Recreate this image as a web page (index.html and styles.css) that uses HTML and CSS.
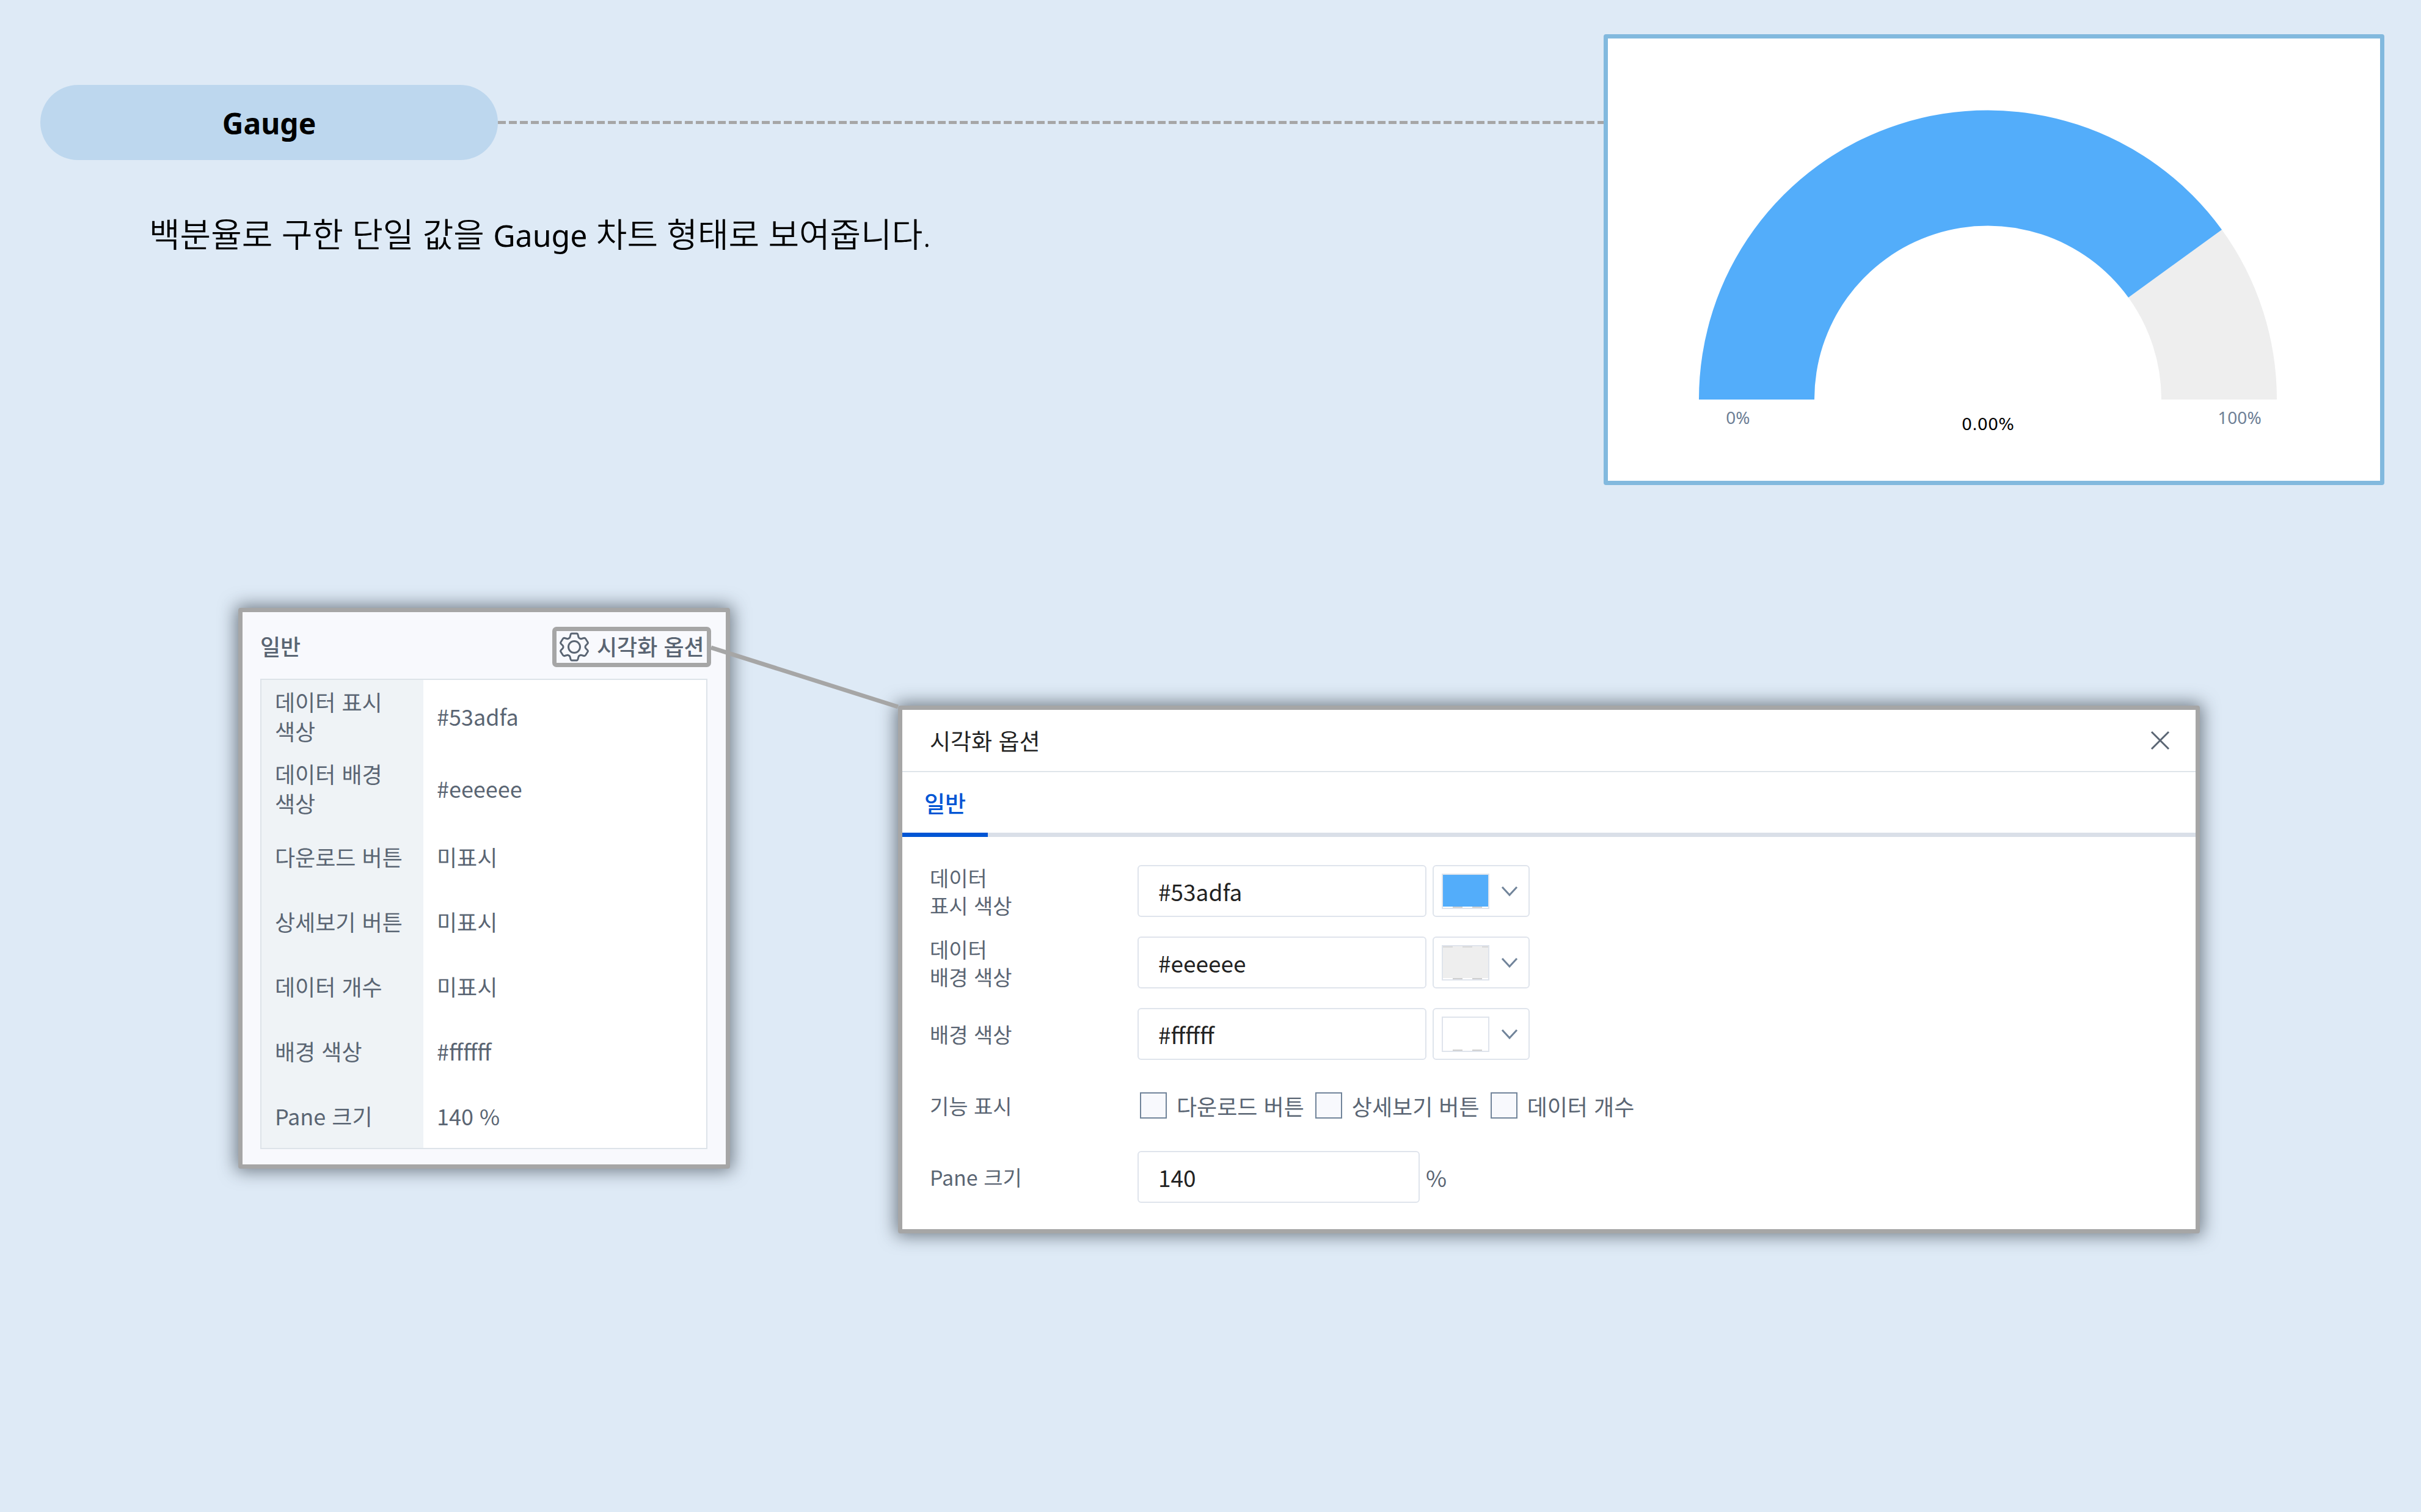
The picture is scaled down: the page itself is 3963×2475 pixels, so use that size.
FILE: index.html
```html
<!DOCTYPE html>
<html lang="ko">
<head>
<meta charset="utf-8">
<meta name="viewport" content="width=device-width, initial-scale=1">
<title>Gauge</title>
<link rel="stylesheet" href="styles.css">
</head>
<body>
<main class="page">
  <section class="intro">
    <div class="intro-text">
      <div class="title-row">
        <h1 class="title-pill">Gauge</h1>
        <div class="title-line"></div>
      </div>
      <p class="description">백분율로 구한 단일 값을 <span class="latin">Gauge</span> 차트 형태로 보여줍니다.</p>
    </div>
    <figure class="chart">
      <svg class="chart-svg" viewBox="0 0 1264 724" role="img" aria-label="Gauge">
        <path fill="#eeeeee" d="M1005 313 A473 473 0 0 1 1095 591 H906 A284 284 0 0 0 852 424 Z"/>
        <path fill="#53adfa" d="M149 591 A473 473 0 0 1 1005 313 L852 424 A284 284 0 0 0 338 591 Z"/>
        <text class="chart-label" x="213" y="631">0%</text>
        <text class="chart-value" x="622" y="641">0.00%</text>
        <text class="chart-label" x="1034" y="631">100%</text>
      </svg>
    </figure>
  </section>

  <section class="panels">
    <section class="panel summary">
      <header class="summary-head">
        <h2 class="summary-title">일반</h2>
        <div class="option-anchor">
          <button class="option-button" type="button">
            <svg class="gear" viewBox="0 0 48 48" aria-hidden="true">
              <path d="M20 2 H28 Q29.500 2 30 4 L31 8 Q31.500 9.500 33 10 Q34.500 11 36 10.500 L39.500 9.500 Q41.500 9 42.500 10.500 L46 16 Q47 17.500 45.500 19 L43 21.500 Q42 22.500 42 24 Q42 25.500 43 26.500 L45.500 29 Q47 30.500 46 32 L42.500 37.500 Q41.500 39 39.500 38.500 L36 37.500 Q34.500 37 33 38 Q31.500 38.500 31 40 L30 44 Q29.500 46 28 46 H20 Q18.500 46 18 44 L17 40 Q16.500 38.500 15 38 Q13.500 37 12 37.500 L8.500 38.500 Q6.500 39 5.500 37.500 L2 32 Q1 30.500 2.500 29 L5 26.500 Q6 25.500 6 24 Q6 22.500 5 21.500 L2.500 19 Q1 17.500 2 16 L5.500 10.500 Q6.500 9 8.500 9.500 L12 10.500 Q13.500 11 15 10 Q16.500 9.500 17 8 L18 4 Q18.500 2 20 2 Z"/>
              <circle cx="24" cy="24" r="9.500"/>
            </svg>
            <span>시각화 옵션</span>
          </button>
          <svg class="connector" viewBox="0 0 308 106" aria-hidden="true"><path d="M0 4 L306 101"/></svg>
        </div>
      </header>
      <table class="summary-table">
        <tbody>
          <tr class="tall"><th scope="row">데이터 표시 색상</th><td>#53adfa</td></tr>
          <tr class="tall"><th scope="row">데이터 배경 색상</th><td>#eeeeee</td></tr>
          <tr><th scope="row">다운로드 버튼</th><td>미표시</td></tr>
          <tr><th scope="row">상세보기 버튼</th><td>미표시</td></tr>
          <tr><th scope="row">데이터 개수</th><td>미표시</td></tr>
          <tr><th scope="row">배경 색상</th><td>#ffffff</td></tr>
          <tr><th scope="row">Pane 크기</th><td>140 %</td></tr>
        </tbody>
      </table>
    </section>

    <section class="panel dialog">
      <header class="dialog-head">
        <h2 class="dialog-title">시각화 옵션</h2>
        <button class="close" type="button" aria-label="닫기">
          <svg viewBox="0 0 32 32" aria-hidden="true"><path d="M2 2 L30 30 M30 2 L2 30"/></svg>
        </button>
      </header>
      <nav class="tabs"><button class="tab" type="button">일반</button></nav>
      <form class="form">
        <div class="row">
          <label class="row-label" for="data-color">데이터<br>표시 색상</label>
          <div class="row-field">
            <input class="text color-text" id="data-color" type="text" value="#53adfa">
            <button class="picker" type="button" aria-label="데이터 표시 색상 선택">
              <span class="swatch swatch-blue"></span>
              <svg class="chevron" viewBox="0 0 28 18" aria-hidden="true"><path d="M2 2 L14 15 L26 2"/></svg>
            </button>
          </div>
        </div>
        <div class="row">
          <label class="row-label" for="back-color">데이터<br>배경 색상</label>
          <div class="row-field">
            <input class="text color-text" id="back-color" type="text" value="#eeeeee">
            <button class="picker" type="button" aria-label="데이터 배경 색상 선택">
              <span class="swatch swatch-gray"></span>
              <svg class="chevron" viewBox="0 0 28 18" aria-hidden="true"><path d="M2 2 L14 15 L26 2"/></svg>
            </button>
          </div>
        </div>
        <div class="row">
          <label class="row-label" for="page-color">배경 색상</label>
          <div class="row-field">
            <input class="text color-text" id="page-color" type="text" value="#ffffff">
            <button class="picker" type="button" aria-label="배경 색상 선택">
              <span class="swatch swatch-white"></span>
              <svg class="chevron" viewBox="0 0 28 18" aria-hidden="true"><path d="M2 2 L14 15 L26 2"/></svg>
            </button>
          </div>
        </div>
        <div class="row">
          <span class="row-label">기능 표시</span>
          <div class="row-field checks">
            <label class="check"><input type="checkbox">다운로드 버튼</label>
            <label class="check"><input type="checkbox">상세보기 버튼</label>
            <label class="check"><input type="checkbox">데이터 개수</label>
          </div>
        </div>
        <div class="row">
          <label class="row-label" for="pane-size">Pane 크기</label>
          <div class="row-field">
            <input class="text pane-text" id="pane-size" type="text" value="140">
            <span class="unit">%</span>
          </div>
        </div>
      </form>
    </section>
  </section>
</main>
</body>
</html>
```
FILE: styles.css
```css
* {
  box-sizing: border-box;
}

body {
  margin: 0;
  background: #deeaf6;
  color: #5a6573;
  font-family: "Noto Sans CJK KR", "Noto Sans", sans-serif;
  font-size: 36px;
  line-height: 48px;
}

h1,
h2,
p,
figure {
  margin: 0;
}

button,
input {
  font: inherit;
  color: inherit;
}

button {
  padding: 0;
  border: 0;
  background: none;
  cursor: pointer;
}

.page {
  min-height: 100vh;
  padding: 56px 60px 120px 66px;
}

/* Title, description and chart */
.intro {
  display: flex;
  align-items: flex-start;
}

.intro-text {
  flex: 1;
  padding-top: 83px;
}

.title-row {
  display: flex;
  align-items: center;
}

.title-pill {
  width: 749px;
  height: 123px;
  border-radius: 62px;
  background: #bdd7ee;
  color: #000;
  font-family: "Noto Sans", sans-serif;
  font-size: 48px;
  font-weight: 700;
  line-height: 125px;
  text-align: center;
}

.title-line {
  flex: 1;
  height: 5px;
  background: repeating-linear-gradient(90deg, #a6a6a6 0 13px, transparent 13px 18px);
}

.description {
  margin-top: 81px;
  padding-left: 178px;
  color: #000;
  font-family: "Noto Sans", "Noto Sans CJK KR", sans-serif;
  font-size: 55px;
  font-weight: 350;
  line-height: 80px;
}

.latin {
  font-size: 50px;
  font-weight: 400;
}

.chart {
  flex: 0 1 1278px;
  border: 7px solid #82b9de;
  border-radius: 4px;
  background: #fff;
}

.chart-svg {
  display: block;
  width: 100%;
}

.chart-label,
.chart-value {
  font-family: "Noto Sans", sans-serif;
  font-size: 28px;
  text-anchor: middle;
}

.chart-label {
  fill: #6e8096;
}

.chart-value {
  fill: #000;
  font-family: "DejaVu Sans", sans-serif;
  font-size: 27px;
}

/* Panels */
.panels {
  display: flex;
  align-items: flex-start;
  gap: 275px;
  margin-top: 201px;
  padding: 0 302px 0 324px;
}

.panel {
  border: 7px solid #a6a6a6;
  border-radius: 4px;
  box-shadow: 0 0 28px 4px rgba(40, 50, 60, 0.6);
}

.summary {
  flex: none;
  width: 805px;
  padding: 24px 30px 25px 29px;
  background: #f8f9fd;
}

.summary-head {
  display: flex;
  align-items: center;
  justify-content: space-between;
  margin-right: -6px;
  margin-bottom: 19px;
}

.summary-title {
  padding-bottom: 4px;
  font-size: 36px;
  font-weight: 500;
  line-height: 44px;
}

.option-anchor {
  position: relative;
}

.option-button {
  display: flex;
  align-items: center;
  gap: 13px;
  width: 260px;
  height: 66px;
  padding-left: 5px;
  border: 7px solid #a6a6a6;
  border-radius: 7px;
  font-weight: 500;
  line-height: 44px;
  white-space: nowrap;
}

.option-button span {
  padding-bottom: 4px;
}

.gear {
  flex: none;
  width: 48px;
  height: 48px;
  fill: none;
  stroke: #5a6573;
  stroke-width: 3;
  stroke-linejoin: round;
}

.connector {
  position: absolute;
  z-index: 1;
  top: 30px;
  left: 100%;
  width: 308px;
  height: 106px;
  fill: none;
  stroke: #a6a6a6;
  stroke-width: 7;
}

.summary-table {
  width: 100%;
  border: 2px solid #dde3e9;
  border-collapse: separate;
  border-spacing: 0;
  background: #fff;
  table-layout: fixed;
}

.summary-table th,
.summary-table td {
  height: 106px;
  padding: 0 22px;
  font-weight: 400;
  text-align: left;
  vertical-align: middle;
}

.summary-table th {
  width: 265px;
  background: #eff3f6;
}

.summary-table .tall th {
  height: 118px;
  padding-right: 60px;
}

.dialog {
  flex: 1;
  margin-top: 160px;
  background: #fff;
}

.dialog-head {
  display: flex;
  align-items: center;
  justify-content: space-between;
  height: 102px;
  padding: 0 42px 0 45px;
  border-bottom: 2px solid #dfe5ea;
}

.dialog-title {
  color: #222;
  font-size: 37px;
  font-weight: 400;
}

.close {
  width: 32px;
  height: 32px;
}

.close svg {
  display: block;
  fill: none;
  stroke: #5a6573;
  stroke-width: 3;
}

.tabs {
  height: 106px;
  box-shadow: inset 0 -7px #dadfe8;
}

.tab {
  width: 140px;
  height: 106px;
  border-bottom: 7px solid #0055d4;
  color: #0055d4;
  font-size: 37px;
  font-weight: 500;
}

.form {
  display: grid;
  gap: 32px;
  padding: 46px 45px 43px;
}

.row {
  display: flex;
  align-items: center;
  height: 85px;
}

.row-label {
  flex: none;
  width: 340px;
  font-size: 34px;
  line-height: 45px;
}

.row-field {
  display: flex;
  align-items: center;
  gap: 10px;
  font-size: 37px;
}

.text {
  height: 85px;
  padding: 0 32px;
  border: 2px solid #dfe4ec;
  border-radius: 6px;
  background: #fff;
  color: #222;
}

.color-text {
  width: 473px;
}

.pane-text {
  width: 462px;
}

.picker {
  display: flex;
  align-items: center;
  gap: 19px;
  width: 159px;
  height: 85px;
  padding-left: 13px;
  border: 2px solid #dfe4ec;
  border-radius: 6px;
}

.swatch {
  width: 78px;
  height: 58px;
  border: 2px solid #dfe4ec;
  background:
    repeating-linear-gradient(90deg, #fff 0 16px, #cfcfcf 16px 32px) bottom / 100% 2px no-repeat,
    var(--swatch-top, none),
    var(--swatch-color);
}

.swatch-blue {
  --swatch-color: #53adfa;
}

.swatch-gray {
  --swatch-color: #eee;
  --swatch-top: repeating-linear-gradient(90deg, #d8d8d8 0 16px, #eee 16px 32px) top / 100% 2px no-repeat;
}

.swatch-white {
  --swatch-color: #fff;
}

.chevron {
  width: 28px;
  height: 18px;
  fill: none;
  stroke: #71849a;
  stroke-width: 3;
}

.checks {
  gap: 18px;
  padding-left: 4px;
  font-size: 36px;
}

.check {
  display: flex;
  align-items: center;
  gap: 16px;
  white-space: nowrap;
}

.check input {
  width: 44px;
  height: 43px;
  margin: 0;
  border: 2px solid #71849a;
  background: #f8f9fd;
  appearance: none;
}
```
